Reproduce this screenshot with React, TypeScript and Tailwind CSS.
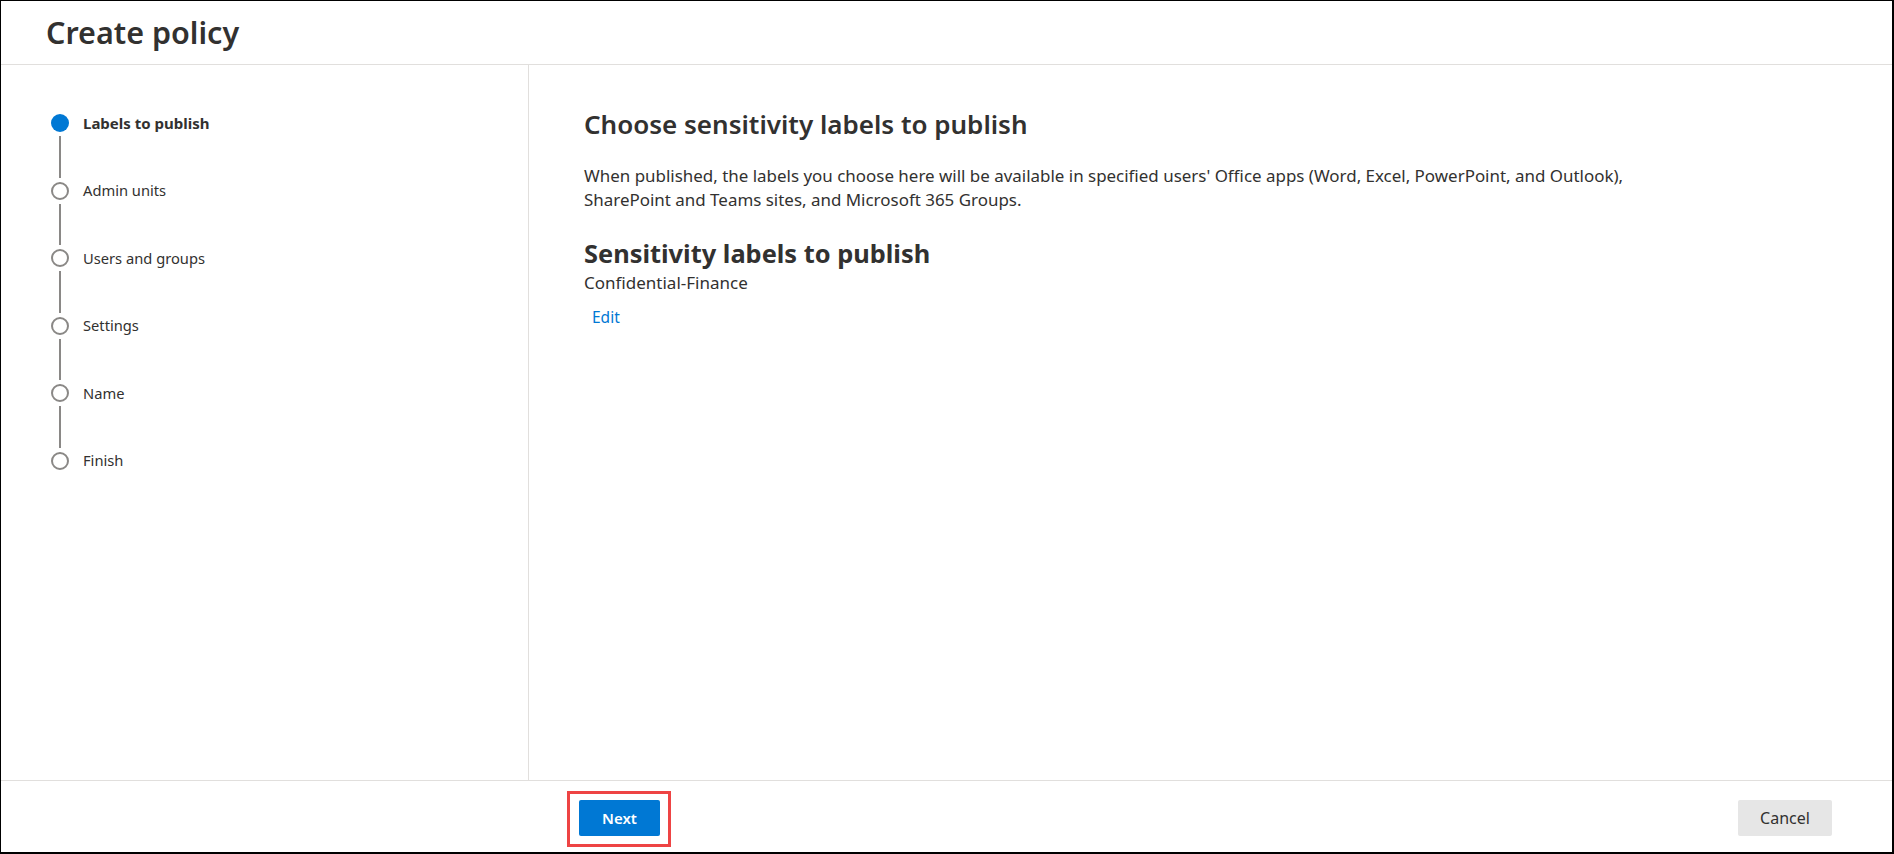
import React from "react";

const steps = [
  { label: "Labels to publish", active: true },
  { label: "Admin units" },
  { label: "Users and groups" },
  { label: "Settings" },
  { label: "Name" },
  { label: "Finish" },
];

const StepList = () => {
  return (
    <ul className="flex flex-col">
      {steps.map((step, i) => {
        const isLast = i === steps.length - 1;
        return (
          <li key={i} className="flex flex-col">
            <div className="flex items-center gap-[14px] h-[18px]">
              {step.active ? (
                <span className="block w-[18px] h-[18px] rounded-full bg-[#0078d4]" />
              ) : (
                <span className="block w-[18px] h-[18px] rounded-full border-2 border-[#8a8886] bg-white" />
              )}
              <span
                className={
                  step.active
                    ? "text-[15px] font-bold text-[#323130]"
                    : "text-[14.7px] text-[#323130]"
                }
              >
                {step.label}
              </span>
            </div>
            {!isLast && (
              <div className="w-[18px] h-[49.5px] flex justify-center py-[4px]">
                <span className="block w-[2px] h-full bg-[#8a8886]" />
              </div>
            )}
          </li>
        );
      })}
    </ul>
  );
};

export default function App() {
  return (
    <div className="h-[854px] w-full flex flex-col bg-white border-l border-t border-r-2 border-b-2 border-black font-['Noto_Sans',sans-serif] text-[#323130]">
      <header className="h-[64px] shrink-0 border-b border-[#e1dfdd] pl-[45px] pt-[11px]">
        <h1 className="text-[30.5px] leading-[40px] font-semibold">Create policy</h1>
      </header>

      <div className="flex flex-1 min-h-0">
        <nav className="w-[528px] shrink-0 border-r border-[#e1dfdd] pl-[50px] pt-[49px]">
          <StepList />
        </nav>

        <main className="flex-1 pl-[55px] pt-[43px]">
          <h2 className="text-[26px] leading-[32px] font-semibold">
            Choose sensitivity labels to publish
          </h2>
          <p className="mt-[24px] text-[16.95px] leading-[24px] max-w-[1100px]">
            When published, the labels you choose here will be available in specified users'
            Office apps (Word, Excel, PowerPoint, and Outlook), SharePoint and Teams sites, and
            Microsoft 365 Groups.
          </p>
          <h3 className="mt-[25px] text-[25.4px] leading-[32px] font-bold">
            Sensitivity labels to publish
          </h3>
          <p className="mt-[2px] text-[17px] leading-[24px]">Confidential-Finance</p>
          <button className="mt-[10px] ml-[8px] text-[15.5px] leading-[24px] text-[#0078d4]">
            Edit
          </button>
        </main>
      </div>

      <footer className="h-[72px] shrink-0 border-t border-[#e1dfdd] flex items-center justify-between pl-[578px] pr-[60px] pt-[3px]">
        <div className="relative">
          <button className="w-[81px] h-[36px] rounded-[2px] bg-[#0078d4] text-white text-[15px] font-semibold">
            Next
          </button>
          <span className="absolute -left-[12px] -right-[11px] -top-[9px] -bottom-[11px] border-[3px] border-[#ee4444] pointer-events-none" />
        </div>
        <button className="w-[94px] h-[36px] rounded-[2px] bg-[#e6e6e6] text-[16px] text-[#323130]">
          Cancel
        </button>
      </footer>
    </div>
  );
}
